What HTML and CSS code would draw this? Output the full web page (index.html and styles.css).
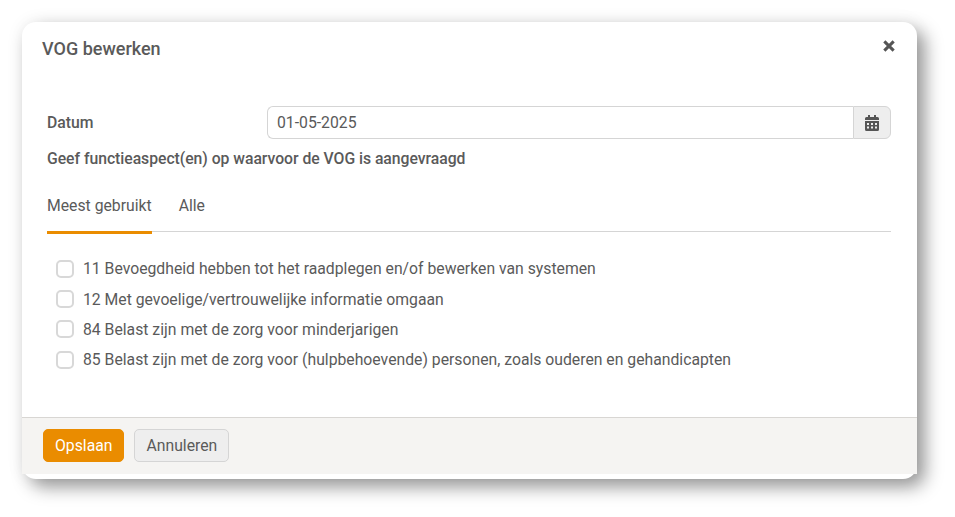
FILE: index.html
```html
<!DOCTYPE html>
<html lang="nl">
<head>
    <meta charset="UTF-8">
    <meta name="viewport" content="width=device-width, initial-scale=1.0">
    <title>VOG bewerken</title>
    <link rel="stylesheet" href="styles.css">
</head>
<body>
    <div class="modal">
        <div class="modal-header">
            <h1>VOG bewerken</h1>
            <svg class="close-icon" viewBox="0 0 12 12" aria-label="Sluiten">
                <path d="M2 2 L10 10 M10 2 L2 10"></path>
            </svg>
        </div>

        <div class="modal-body">
            <div class="form-row">
                <label for="datum">Datum</label>
                <div class="input-group">
                    <input type="text" id="datum" value="01-05-2025">
                    <span class="input-addon">
                        <svg class="calendar-icon" viewBox="0 0 14 16">
                            <path fill-rule="evenodd" d="M3 0h2v2h4V0h2v2h1.5A1.5 1.5 0 0 1 14 3.500V5H0V3.500A1.500 1.500 0 0 1 1.500 2H3V0zM0 6h14v8.500a1.500 1.500 0 0 1-1.500 1.500h-11A1.500 1.500 0 0 1 0 14.500V6zM2 8v2h2V8H2zm4 0v2h2V8H6zm4 0v2h2V8h-2zm-8 3.500v2h2v-2H2zm4 0v2h2v-2H6zm4 0v2h2v-2h-2z"></path>
                        </svg>
                    </span>
                </div>
            </div>

            <p class="section-label">Geef functieaspect(en) op waarvoor de VOG is aangevraagd</p>

            <div class="tabs">
                <a class="tab active">Meest gebruikt</a>
                <a class="tab">Alle</a>
            </div>

            <ul class="check-list">
                <li><span class="checkbox"></span>11 Bevoegdheid hebben tot het raadplegen en/of bewerken van systemen</li>
                <li><span class="checkbox"></span>12 Met gevoelige/vertrouwelijke informatie omgaan</li>
                <li><span class="checkbox"></span>84 Belast zijn met de zorg voor minderjarigen</li>
                <li><span class="checkbox"></span>85 Belast zijn met de zorg voor (hulpbehoevende) personen, zoals ouderen en gehandicapten</li>
            </ul>
        </div>

        <div class="modal-footer">
            <button class="btn btn-primary">Opslaan</button>
            <button class="btn">Annuleren</button>
        </div>
    </div>
</body>
</html>
```

FILE: styles.css
```css
html, body {
    height: 517px;
}
body {
    margin: 0;
    padding: 22px 0 0 22px;
    box-sizing: border-box;
    overflow: hidden;
    background-color: #fff;
    font-family: Roboto, "Liberation Sans", sans-serif;
    font-size: 15.750px;
    color: #5a5a5a;
}
.modal {
    width: 895px;
    height: 457px;
    display: flex;
    flex-direction: column;
    background: #fff;
    border-radius: 14px;
    box-shadow: 0 0 20px rgba(0, 0, 0, 0.05), 8px 8px 18px rgba(0, 0, 0, 0.4);
    padding-bottom: 5px;
    box-sizing: border-box;
}
.modal-header {
    height: 53px;
    padding: 0 21px 0 20px;
    display: flex;
    align-items: center;
    justify-content: space-between;
}
.modal-header h1 {
    margin: 0;
    font-size: 18px;
    font-weight: 500;
    color: #5a5a5a;
}
.close-icon {
    width: 14px;
    height: 14px;
    margin-bottom: 5px;
    stroke: #555;
    stroke-width: 2.6;
    fill: none;
}
.modal-body {
    flex: 1;
    padding: 31px 26px 0 25px;
}
.form-row {
    display: flex;
    align-items: center;
}
.form-row label {
    width: 220px;
    font-weight: 500;
}
.input-group {
    flex: 1;
    display: flex;
    height: 33px;
}
.input-group input {
    flex: 1;
    min-width: 0;
    box-sizing: border-box;
    padding: 0 9px;
    border: 1px solid #d5d5d5;
    border-right: none;
    border-radius: 6px 0 0 6px;
    font-family: inherit;
    font-size: 15.750px;
    color: #5a5a5a;
}
.input-addon {
    width: 38px;
    box-sizing: border-box;
    display: flex;
    align-items: center;
    justify-content: center;
    background-color: #eee;
    border: 1px solid #d5d5d5;
    border-radius: 0 6px 6px 0;
}
.calendar-icon {
    width: 14px;
    height: 16px;
    fill: #555;
}
.section-label {
    margin: 10px 0 0;
    line-height: 20px;
    font-weight: 500;
    letter-spacing: -0.035px;
}
.tabs {
    display: flex;
    gap: 27px;
    margin-top: 18px;
    border-bottom: 1px solid #d5d5d5;
}
.tab {
    padding: 9px 0 15px;
    line-height: 20px;
    margin-bottom: -3px;
    border-bottom: 3px solid transparent;
}
.tab.active {
    border-bottom-color: #ea8c00;
}
.check-list {
    list-style: none;
    margin: 21.600px 0 0;
    padding: 0 0 0 9px;
}
.check-list li {
    display: flex;
    align-items: center;
    height: 30.300px;
}
.checkbox {
    width: 14px;
    height: 14px;
    margin-right: 9px;
    border: 2px solid #d8d8d8;
    border-radius: 5px;
    background: #fff;
}
.modal-footer {
    height: 57px;
    box-sizing: border-box;
    padding: 11px 21px 0;
    display: flex;
    align-items: flex-start;
    gap: 10px;
    background-color: #f5f4f2;
    border-top: 1px solid #d8d6d3;
}
.btn {
    height: 33px;
    padding: 0 11px;
    font-family: inherit;
    font-size: 15.750px;
    color: #5a5a5a;
    background-color: #eee;
    border: 1px solid #d5d5d5;
    border-radius: 5px;
    cursor: pointer;
}
.btn-primary {
    color: #fff;
    background-color: #ea8c00;
    border-color: #ea8c00;
}
```
